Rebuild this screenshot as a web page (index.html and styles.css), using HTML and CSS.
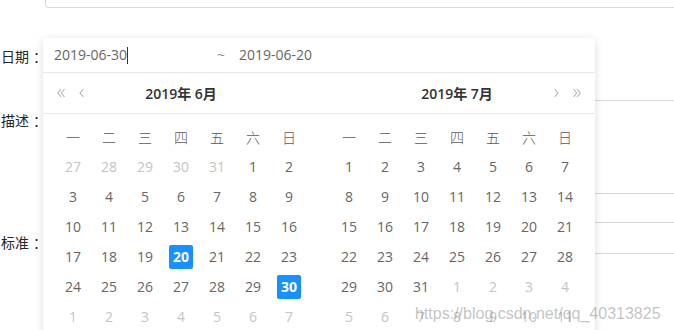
FILE: index.html
```html
<!DOCTYPE html>
<html lang="zh-CN">
<head>
<meta charset="utf-8">
<title>日期范围选择</title>
<link rel="stylesheet" href="styles.css">
</head>
<body>
<div class="page">
  <div class="form">
    <div class="top-input"></div>
    <div class="item item-date"><label class="lbl">日期<span class="colon">：</span></label><div class="ctrl ctrl-input"></div></div>
    <div class="item item-desc"><label class="lbl">描述<span class="colon">：</span></label><div class="ctrl ctrl-area"></div></div>
    <div class="item item-std"><label class="lbl">标准<span class="colon">：</span></label><div class="ctrl ctrl-input"></div></div>
  </div>

  <div class="picker">
    <div class="range-input">
      <span class="in1">2019-06-30<i class="caret"></i></span>
      <span class="tilde">~</span>
      <span class="in2">2019-06-20</span>
    </div>
    <div class="panels">
      <div class="half">
        <div class="head">
          <div class="nav nav-left">
            <svg class="ico dbl" width="8" height="10" viewBox="0 0 8 10"><polyline points="4,1 0.8,5 4,9"/><polyline points="7.5,1 4.3,5 7.5,9"/></svg>
            <svg class="ico sgl" width="5" height="10" viewBox="0 0 5 10"><polyline points="4.3,1 1,5 4.3,9"/></svg>
          </div>
          <div class="title">2019年 6月</div>
          <div></div>
        </div>
        <div class="body">
          <div class="wk">一</div><div class="wk">二</div><div class="wk">三</div><div class="wk">四</div><div class="wk">五</div><div class="wk">六</div><div class="wk">日</div>
          <div class="c m"><span>27</span></div><div class="c m"><span>28</span></div><div class="c m"><span>29</span></div><div class="c m"><span>30</span></div><div class="c m"><span>31</span></div><div class="c"><span>1</span></div><div class="c"><span>2</span></div>
          <div class="c"><span>3</span></div><div class="c"><span>4</span></div><div class="c"><span>5</span></div><div class="c"><span>6</span></div><div class="c"><span>7</span></div><div class="c"><span>8</span></div><div class="c"><span>9</span></div>
          <div class="c"><span>10</span></div><div class="c"><span>11</span></div><div class="c"><span>12</span></div><div class="c"><span>13</span></div><div class="c"><span>14</span></div><div class="c"><span>15</span></div><div class="c"><span>16</span></div>
          <div class="c"><span>17</span></div><div class="c"><span>18</span></div><div class="c"><span>19</span></div><div class="c sel"><span>20</span></div><div class="c"><span>21</span></div><div class="c"><span>22</span></div><div class="c"><span>23</span></div>
          <div class="c"><span>24</span></div><div class="c"><span>25</span></div><div class="c"><span>26</span></div><div class="c"><span>27</span></div><div class="c"><span>28</span></div><div class="c"><span>29</span></div><div class="c sel"><span>30</span></div>
          <div class="c m"><span>1</span></div><div class="c m"><span>2</span></div><div class="c m"><span>3</span></div><div class="c m"><span>4</span></div><div class="c m"><span>5</span></div><div class="c m"><span>6</span></div><div class="c m"><span>7</span></div>
        </div>
      </div>
      <div class="half">
        <div class="head">
          <div></div>
          <div class="title">2019年 7月</div>
          <div class="nav nav-right">
            <svg class="ico sgl" width="5" height="10" viewBox="0 0 5 10"><polyline points="0.7,1 4,5 0.7,9"/></svg>
            <svg class="ico dbl" width="8" height="10" viewBox="0 0 8 10"><polyline points="0.5,1 3.7,5 0.5,9"/><polyline points="4,1 7.2,5 4,9"/></svg>
          </div>
        </div>
        <div class="body">
          <div class="wk">一</div><div class="wk">二</div><div class="wk">三</div><div class="wk">四</div><div class="wk">五</div><div class="wk">六</div><div class="wk">日</div>
          <div class="c"><span>1</span></div><div class="c"><span>2</span></div><div class="c"><span>3</span></div><div class="c"><span>4</span></div><div class="c"><span>5</span></div><div class="c"><span>6</span></div><div class="c"><span>7</span></div>
          <div class="c"><span>8</span></div><div class="c"><span>9</span></div><div class="c"><span>10</span></div><div class="c"><span>11</span></div><div class="c"><span>12</span></div><div class="c"><span>13</span></div><div class="c"><span>14</span></div>
          <div class="c"><span>15</span></div><div class="c"><span>16</span></div><div class="c"><span>17</span></div><div class="c"><span>18</span></div><div class="c"><span>19</span></div><div class="c"><span>20</span></div><div class="c"><span>21</span></div>
          <div class="c"><span>22</span></div><div class="c"><span>23</span></div><div class="c"><span>24</span></div><div class="c"><span>25</span></div><div class="c"><span>26</span></div><div class="c"><span>27</span></div><div class="c"><span>28</span></div>
          <div class="c"><span>29</span></div><div class="c"><span>30</span></div><div class="c"><span>31</span></div><div class="c m"><span>1</span></div><div class="c m"><span>2</span></div><div class="c m"><span>3</span></div><div class="c m"><span>4</span></div>
          <div class="c m"><span>5</span></div><div class="c m"><span>6</span></div><div class="c m"><span>7</span></div><div class="c m"><span>8</span></div><div class="c m"><span>9</span></div><div class="c m"><span>10</span></div><div class="c m"><span>11</span></div>
        </div>
      </div>
    </div>
  </div>

  <div class="watermark">https://blog.csdn.net/qq_40313825</div>
</div>
</body>
</html>
```

FILE: styles.css
```css
html, body {
  margin: 0;
  padding: 0;
  width: 674px;
  height: 330px;
  overflow: hidden;
  background: #fff;
}
body {
  font-family: "Open Sans", "Noto Sans CJK SC", sans-serif;
  font-size: 14px;
  color: #595959;
}
.page {
  position: relative;
  width: 674px;
  height: 330px;
  overflow: hidden;
}

/* background form */
.form {
  display: flex;
  flex-direction: column;
}
.top-input {
  box-sizing: border-box;
  height: 8px;
  margin-left: 45px;
  margin-right: -30px;
  border: 1px solid #d9d9d9;
  border-top: none;
  border-radius: 0 0 4px 4px;
}
.item {
  display: flex;
  align-items: flex-start;
}
.lbl {
  flex: none;
  width: 43px;
  text-align: right;
  line-height: 40px;
  white-space: nowrap;
  font-family: "Noto Sans CJK SC", sans-serif;
  color: #262626;
  margin-right: 2px;
}
.colon {
  display: inline-block;
  margin-left: 4px;
  margin-right: -4px;
}
.ctrl {
  flex: 1;
  box-sizing: border-box;
  margin-right: -30px;
  border: 1px solid #d9d9d9;
  border-radius: 4px;
}
.item-date { margin-top: 28px; height: 40px; }
.item-date .ctrl { flex: none; width: 420px; height: 32px; margin-top: 4px; }
.item-desc { margin-top: 24px; }
.item-desc .ctrl { height: 94px; }
.item-std { margin-top: 28px; }
.item-std .ctrl { height: 32px; }

/* picker popup */
.picker {
  position: absolute;
  left: 43px;
  top: 38px;
  width: 552px;
  background: #fff;
  border-radius: 4px;
  box-shadow: 0 2px 8px rgba(0, 0, 0, 0.15);
}
.range-input {
  box-sizing: border-box;
  height: 35px;
  border-bottom: 1px solid #e8e8e8;
  display: flex;
  align-items: center;
  padding-left: 11px;
  color: #666;
  line-height: 20px;
}
.in1 {
  width: 163px;
  display: flex;
  align-items: center;
}
.caret {
  display: inline-block;
  width: 1px;
  height: 17px;
  background: #333;
}
.tilde {
  width: 22px;
  color: #8c8c8c;
}
.panels {
  display: grid;
  grid-template-columns: 276px 276px;
}
.head {
  box-sizing: border-box;
  height: 41px;
  border-bottom: 1px solid #e8e8e8;
  display: grid;
  grid-template-columns: 1fr auto 1fr;
  align-items: center;
}
.title {
  font-weight: 600;
  color: #333;
}
.nav {
  display: flex;
  align-items: center;
  gap: 14px;
}
.nav-left { padding-left: 14px; justify-content: flex-start; }
.nav-right { padding-right: 14px; justify-content: flex-end; }
.ico polyline {
  fill: none;
  stroke: #b3b3b3;
  stroke-width: 1.1;
}
.body {
  padding: 8px 12px;
  display: grid;
  grid-template-columns: repeat(7, 36px);
  grid-auto-rows: 30px;
}
.wk {
  display: flex;
  align-items: center;
  justify-content: center;
  font-family: "Noto Sans CJK SC", sans-serif;
  font-weight: 300;
  color: #595959;
}
.c {
  display: flex;
  align-items: center;
  justify-content: center;
}
.c span {
  display: block;
  width: 24px;
  height: 24px;
  line-height: 24px;
  text-align: center;
  border-radius: 2px;
  color: #666;
}
.c.m span { color: #c4c4c4; }
.c.sel span {
  background: #1890ff;
  color: #fff;
  font-weight: 700;
}

.watermark {
  position: absolute;
  left: 415px;
  top: 305px;
  font-family: "Liberation Sans", Arial, sans-serif;
  font-size: 16px;
  line-height: 18px;
  color: rgba(120, 120, 120, 0.45);
  white-space: nowrap;
}
```
